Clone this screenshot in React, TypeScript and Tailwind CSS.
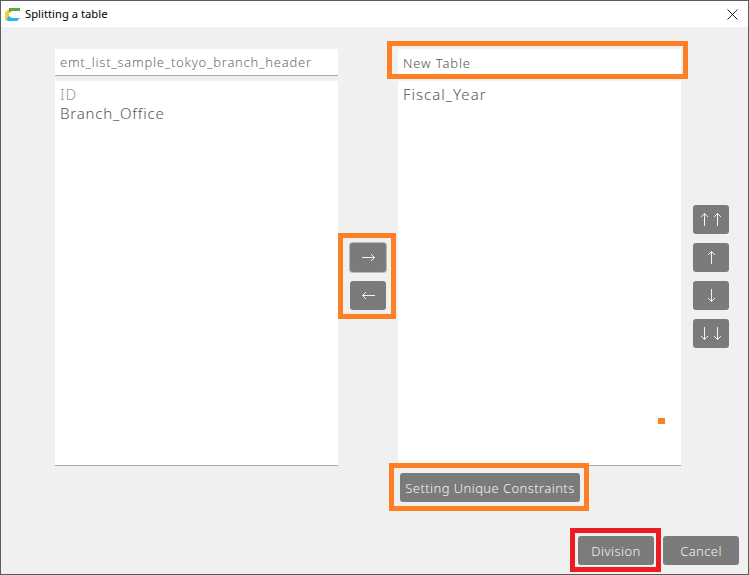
import type { ReactNode } from "react";

const font = { fontFamily: '"Noto Sans", "Open Sans", sans-serif' };

function Arrow({ dir }: { dir: "right" | "left" | "up" | "down" }) {
  const rot = { right: "rotate-0", left: "rotate-180", up: "-rotate-90", down: "rotate-90" }[dir];
  return (
    <svg width="13" height="9" viewBox="0 0 13 9" className={`${rot} shrink-0`} fill="none" stroke="#f4f4f4" strokeWidth="1">
      <path d="M0 4.5H12.5M9 1L12.5 4.5L9 8" />
    </svg>
  );
}

function GreyButton({ children, className = "" }: { children: ReactNode; className?: string }) {
  return (
    <button className={`h-[29px] rounded-[3px] bg-[#7b7b7b] text-[#f5f5f5] text-[13px] font-light tracking-[0.42px] flex items-center justify-center ${className}`}>
      {children}
    </button>
  );
}

function Highlight({ className }: { className: string }) {
  return <span className={`absolute pointer-events-none border-[5px] ${className}`} />;
}

export default function App() {
  return (
    <div className="w-[749px] h-[575px] flex flex-col border border-[#5c5c5c] bg-[#f0f0f0] overflow-hidden" style={font}>
      {/* title bar */}
      <div className="h-[26px] bg-white flex items-center shrink-0">
        <svg width="15" height="15" viewBox="0 0 15 15" className="ml-[4px] mt-[1px]">
          <path d="M4 1H15V4H7L4 6Z" fill="#5cab3c" />
          <path d="M0 5L4 2V11L0 13Z" fill="#f7cf35" />
          <path d="M4 9L7 11H15L12 14H3L1 13Z" fill="#2fb2ee" />
        </svg>
        <span className="ml-[5px] text-[11.25px] text-black">Splitting a table</span>
        <svg width="11" height="11" viewBox="0 0 11 11" className="ml-auto mr-[10px]" stroke="#222" strokeWidth="1">
          <path d="M0.5 0.5L10.5 10.5M10.5 0.5L0.5 10.5" />
        </svg>
      </div>

      <div className="flex-1 flex flex-col">
        <div className="flex pl-[54px] pt-[22px]">
          {/* source table */}
          <div className="w-[283px] flex flex-col">
            <div className="h-[27px] bg-white border-b border-[#aaaaaa] pl-[5px] pt-[2px] flex items-center text-[13px] font-light tracking-[0.76px] text-[#6a6a6a]">
              emt_list_sample_tokyo_branch_header
            </div>
            <div className="mt-[5px] h-[385px] bg-white border-b border-[#aaaaaa] pl-[5px] pt-[4px] text-[15px] font-light tracking-[0.8px] leading-[19px] text-[#555555]">
              <div className="text-[#999999]">ID</div>
              <div>Branch_Office</div>
            </div>
          </div>

          {/* move buttons */}
          <div className="w-[60px] pl-[12px] pt-[194px]">
            <div className="relative flex flex-col gap-[9px] w-[36px]">
              <Highlight className="-left-[12px] -top-[10px] w-[58px] h-[86px] border-[#ff7f27]" />
              <GreyButton className="w-[36px] shadow-[0_0_0_1px_#b9b9b9]"><Arrow dir="right" /></GreyButton>
              <GreyButton className="w-[36px]"><Arrow dir="left" /></GreyButton>
            </div>
          </div>

          {/* new table */}
          <div className="w-[283px] flex flex-col">
            <div className="relative h-[27px] bg-white pl-[5px] pt-[2px] flex items-center text-[13px] font-light tracking-[0.85px] text-[#555555]">
              New Table
              <Highlight className="-left-[11px] -top-[8px] w-[301px] h-[38px] border-[#ff7f27]" />
            </div>
            <div className="mt-[5px] h-[385px] bg-white border-b border-[#aaaaaa] pl-[5px] pt-[4px] text-[15px] font-light tracking-[1px] leading-[19px] text-[#555555] relative">
              Fiscal_Year
              <span className="absolute left-[260px] top-[337px] w-[7px] h-[6px] bg-[#ff7f27]" />
            </div>
          </div>

          {/* order buttons */}
          <div className="ml-[12px] pt-[156px] flex flex-col gap-[9px]">
            <GreyButton className="w-[36px] gap-0"><span className="flex -mx-[4px]"><span className="-rotate-90 w-[13px]"><Arrow dir="right" /></span><span className="-rotate-90 w-[13px]"><Arrow dir="right" /></span></span></GreyButton>
            <GreyButton className="w-[36px]"><Arrow dir="up" /></GreyButton>
            <GreyButton className="w-[36px]"><Arrow dir="down" /></GreyButton>
            <GreyButton className="w-[36px]"><span className="flex -mx-[4px]"><span className="rotate-90 w-[13px]"><Arrow dir="right" /></span><span className="rotate-90 w-[13px]"><Arrow dir="right" /></span></span></GreyButton>
          </div>
        </div>

        {/* unique constraints */}
        <div className="pl-[399px] mt-[7px]">
          <GreyButton className="relative w-[180px] pt-[2px]">
            Setting Unique Constraints
            <Highlight className="-left-[11px] -top-[10px] w-[200px] h-[48px] border-[#ff7f27]" />
          </GreyButton>
        </div>

        {/* footer */}
        <div className="mt-[34px] pr-[9px] flex justify-end gap-[9px]">
          <GreyButton className="relative w-[76px] pt-[2px]">
            Division
            <Highlight className="-left-[8px] -top-[8px] w-[91px] h-[44px] border-[#ed1c24]" />
          </GreyButton>
          <GreyButton className="w-[76px] pt-[2px]">Cancel</GreyButton>
        </div>
      </div>
    </div>
  );
}
